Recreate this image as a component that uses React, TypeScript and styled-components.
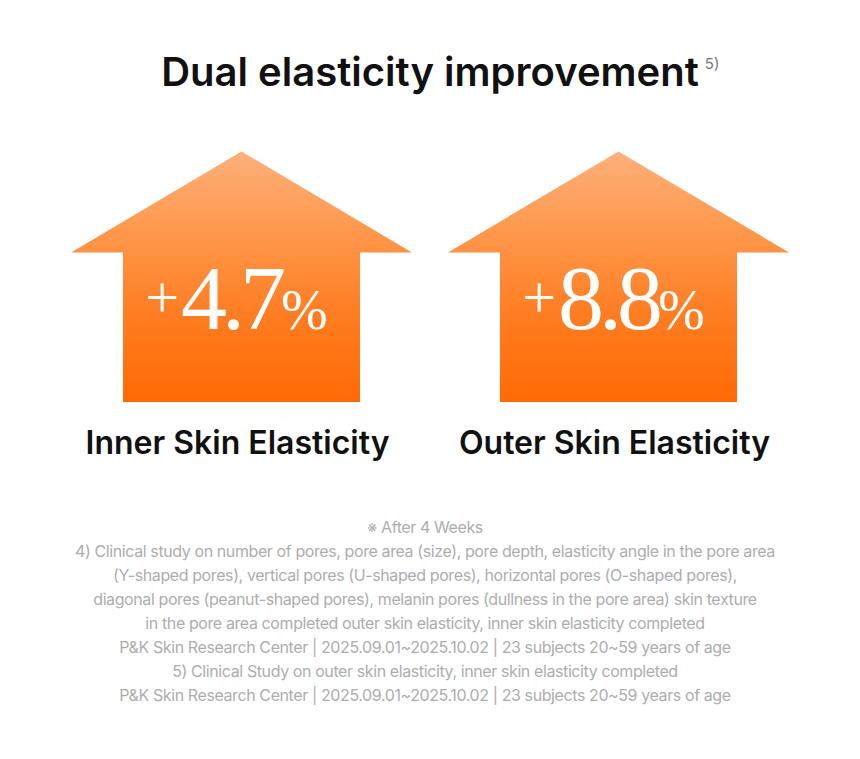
import React from 'react';
import styled, { createGlobalStyle } from 'styled-components';

const GlobalStyle = createGlobalStyle`
  body {
    margin: 0;
    background: #ffffff;
    font-family: Inter, "Noto Sans", "Liberation Sans", sans-serif;
  }
`;

const Page = styled.div`
  width: 860px;
  height: 759px;
  display: flex;
  flex-direction: column;
  align-items: center;
  padding-top: 48px;
  box-sizing: border-box;
`;

const Title = styled.h1`
  position: relative;
  margin: 0;
  font-size: 40px;
  font-weight: 600;
  line-height: 1.21;
  letter-spacing: 0;
  color: #111111;
`;

const Note = styled.sup`
  position: absolute;
  left: calc(100% + 6px);
  top: 8px;
  font-size: 15px;
  font-weight: 400;
  line-height: 1;
  color: #777777;
`;

const Stats = styled.div`
  display: flex;
  gap: 36px;
  margin-top: 55px;
`;

const Stat = styled.div`
  display: flex;
  flex-direction: column;
  align-items: center;
`;

const Arrow = styled.div`
  width: 341px;
  height: 251px;
  padding-top: 101px;
  box-sizing: border-box;
  display: flex;
  justify-content: center;
  align-items: flex-start;
  background: linear-gradient(180deg, #fdb07c 0%, #ff9648 35%, #ff7d22 65%, #ff6a05 100%);
  clip-path: polygon(170.5px 0, 341px 101px, 289px 101px, 289px 251px, 52px 251px, 52px 101px, 0 101px);
`;

const Value = styled.div`
  display: flex;
  align-items: baseline;
  padding-right: 10px;
  font-family: "Liberation Serif", "DejaVu Serif", serif;
  color: #ffffff;
  line-height: 1;
`;

const Plus = styled.span`
  align-self: center;
  font-size: 60px;
  padding-bottom: 2px;
  margin-right: 2px;
`;

const Digits = styled.span`
  font-size: 92px;
  letter-spacing: -5px;
`;

const Percent = styled.span`
  font-size: 56px;
`;

const Label = styled.div`
  margin-top: 22px;
  margin-right: 8px;
  font-size: 32px;
  font-weight: 600;
  line-height: 1.2;
  letter-spacing: 0;
  color: #111111;
`;

const Footnotes = styled.div`
  margin-top: 52px;
  padding-right: 10px;
  display: flex;
  flex-direction: column;
  align-items: center;
  font-size: 16px;
  line-height: 24px;
  letter-spacing: -0.4px;
  color: #adadad;
  text-align: center;
`;

const stats = [
  { value: '4.7', label: 'Inner Skin Elasticity' },
  { value: '8.8', label: 'Outer Skin Elasticity' },
];

const notes = [
  '※ After 4 Weeks',
  '4) Clinical study on number of pores, pore area (size), pore depth, elasticity angle in the pore area',
  '(Y-shaped pores), vertical pores (U-shaped pores), horizontal pores (O-shaped pores),',
  'diagonal pores (peanut-shaped pores), melanin pores (dullness in the pore area) skin texture',
  'in the pore area completed outer skin elasticity, inner skin elasticity completed',
  'P&K Skin Research Center | 2025.09.01~2025.10.02 | 23 subjects 20~59 years of age',
  '5) Clinical Study on outer skin elasticity, inner skin elasticity completed',
  'P&K Skin Research Center | 2025.09.01~2025.10.02 | 23 subjects 20~59 years of age',
];

const App: React.FC = () => (
  <>
    <GlobalStyle />
    <Page>
      <Title>
        Dual elasticity improvement
        <Note>5)</Note>
      </Title>
      <Stats>
        {stats.map((s) => (
          <Stat key={s.label}>
            <Arrow>
              <Value>
                <Plus>+</Plus>
                <Digits>{s.value}</Digits>
                <Percent>%</Percent>
              </Value>
            </Arrow>
            <Label>{s.label}</Label>
          </Stat>
        ))}
      </Stats>
      <Footnotes>
        {notes.map((n, i) => (
          <span key={i}>{n}</span>
        ))}
      </Footnotes>
    </Page>
  </>
);

export default App;
